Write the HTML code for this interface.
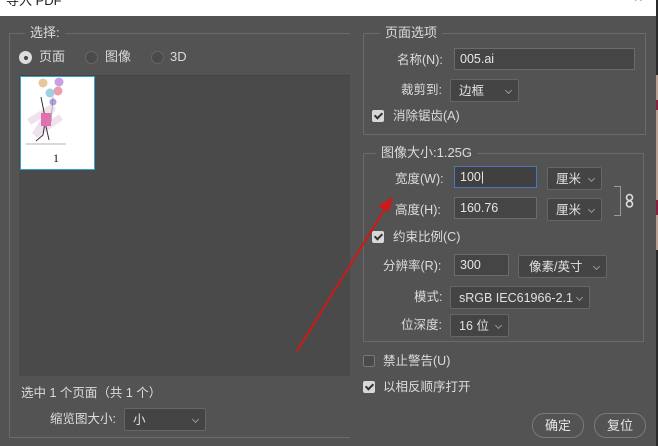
<!DOCTYPE html>
<html><head><meta charset="utf-8"><style>
body{margin:0;width:658px;height:446px;overflow:hidden;background:#535353;position:relative;font-family:"Liberation Sans","Noto Sans CJK SC",sans-serif;font-size:12.5px;color:#dcdcdc}
div,span{position:absolute;box-sizing:border-box}
.t{white-space:nowrap;line-height:16px}
.grp{border:1px solid #6a6a6a}
.lg{background:#535353;padding:0 5px;font-size:13px}
.inp{background:#454545;border:1px solid #6b6b6b;padding:0 5px;line-height:20px;color:#e6e6e6}
.sel{background:#444;border:1px solid #666;border-radius:2px;padding:0 8px;line-height:22px;color:#e0e0e0}
.sel:after{content:"";position:absolute;right:7px;top:8px;width:4px;height:4px;border-right:1px solid #999;border-bottom:1px solid #999;transform:rotate(45deg)}
.cb{width:12px;height:12px;background:#d8d8d8;border-radius:2px}
.cb:after{content:"";position:absolute;left:3.5px;top:1px;width:3px;height:6px;border-right:2px solid #333;border-bottom:2px solid #333;transform:rotate(45deg)}
.cbo{width:12px;height:12px;border:1px solid #777;background:#4a4a4a;border-radius:2px}
.r{width:13px;height:13px;border-radius:50%;border:1px solid #666;background:#4a4a4a}
.btn{border:1px solid #7a7a7a;border-radius:12px;height:25px;line-height:23px;text-align:center;color:#e6e6e6;font-size:13px}
</style></head><body>
<div style="left:0;top:0;width:656px;height:16px;background:#fff"></div>
<div class="t" style="left:6px;top:-7px;color:#222;font-size:13px">导入 PDF</div>
<div class="t" style="left:635px;top:-8px;color:#333;font-size:14px">^</div>
<div style="left:656px;top:0;width:2px;height:446px;background:#2a2a2a"></div>
<div style="left:656px;top:75px;width:2px;height:175px;background:#b9a090"></div>
<div style="left:656px;top:100px;width:2px;height:10px;background:#8a2040"></div>
<div style="left:656px;top:200px;width:2px;height:15px;background:#8a2040"></div>

<div class="grp" style="left:9px;top:33px;width:341px;height:405px;border-right:none"></div>
<div class="t lg" style="left:25px;top:25px">选择:</div>
<div class="r" style="left:19px;top:51px;background:#ddd;border-color:#ddd"></div>
<div style="left:23.5px;top:55.5px;width:4px;height:4px;border-radius:50%;background:#444"></div>
<div class="t" style="left:39px;top:49px;font-size:13px">页面</div>
<div class="r" style="left:85px;top:51px"></div>
<div class="t" style="left:105px;top:49px;font-size:13px">图像</div>
<div class="r" style="left:151px;top:51px"></div>
<div class="t" style="left:170px;top:49px;font-size:13px">3D</div>
<div style="left:19px;top:75px;width:331px;height:301px;background:#4a4a4a;border-top:1px solid #444"></div>
<div style="left:20px;top:76px;width:75px;height:94px;background:#fff;border:1px solid #3aa0c8"></div>
<svg style="position:absolute;left:21px;top:77px" width="73" height="72" viewBox="0 0 73 72">
<path d="M8 45 L32 30 L14 58 L40 40" stroke="#f0e2ec" stroke-width="7" fill="none"/>
<circle cx="22" cy="6" r="4.5" fill="#e8c89a"/><circle cx="38" cy="5" r="4.5" fill="#c8a0e0"/><circle cx="29" cy="16" r="4.5" fill="#9fd0e0"/><circle cx="37" cy="14" r="4.5" fill="#e8a0b0"/><circle cx="32" cy="25" r="3.5" fill="#b0a0e0"/>
<path d="M32 20 L30 45" stroke="#888" stroke-width="0.6"/>
<path d="M20 20 L24 40 M24 45 L22 58 L15 64 M24 45 L28 63" stroke="#333" stroke-width="1" fill="none"/>
<rect x="20" y="36" width="10" height="13" fill="#e070b0"/>
<path d="M5 67 L45 67" stroke="#999" stroke-width="0.8"/>
</svg>
<div class="t" style="left:53px;top:150px;color:#111;font-family:'Liberation Serif',serif;font-size:12px">1</div>
<div class="t" style="left:21px;top:385px">选中 1 个页面（共 1 个）</div>
<div class="t" style="left:50px;top:411px">缩览图大小:</div>
<div class="sel" style="left:124px;top:408px;width:82px;height:23px">小</div>

<div class="grp" style="left:363px;top:33px;width:283px;height:102px"></div>
<div class="t lg" style="left:380px;top:25px">页面选项</div>
<div class="t" style="left:397px;top:52px">名称(N):</div>
<div class="inp" style="left:454px;top:48px;width:181px;height:22px">005.ai</div>
<div class="t" style="left:401px;top:82px">裁剪到:</div>
<div class="sel" style="left:450px;top:79px;width:69px;height:23px">边框</div>
<div class="cb" style="left:372px;top:110px"></div>
<div class="t" style="left:393px;top:108px">消除锯齿(A)</div>

<div class="grp" style="left:363px;top:153px;width:281px;height:189px"></div>
<div class="t lg" style="left:376px;top:145px">图像大小:1.25G</div>
<div class="t" style="left:395px;top:171px">宽度(W):</div>
<div class="inp" style="left:454px;top:166px;width:83px;height:22px;border-color:#4a78b8;background:#404040">100|</div>
<div class="sel" style="left:547px;top:167px;width:55px;height:23px">厘米</div>
<div class="t" style="left:395px;top:202px">高度(H):</div>
<div class="inp" style="left:454px;top:197px;width:83px;height:22px">160.76</div>
<div class="sel" style="left:547px;top:198px;width:55px;height:23px">厘米</div>
<div style="left:614px;top:186px;width:7px;height:30px;border:1px solid #999;border-left:none"></div>
<svg style="position:absolute;left:625px;top:193px" width="10" height="16" viewBox="0 0 10 16">
<rect x="1.5" y="1.5" width="6" height="6" rx="3" fill="none" stroke="#ddd" stroke-width="1.6"/>
<rect x="1.5" y="8" width="6" height="6" rx="3" fill="none" stroke="#ddd" stroke-width="1.6"/>
</svg>
<div class="cb" style="left:372px;top:231px"></div>
<div class="t" style="left:393px;top:229px">约束比例(C)</div>
<div class="t" style="left:383px;top:258px">分辨率(R):</div>
<div class="inp" style="left:454px;top:254px;width:55px;height:22px">300</div>
<div class="sel" style="left:518px;top:255px;width:89px;height:23px;padding-left:10px">像素/英寸</div>
<div class="t" style="left:414px;top:289px">模式:</div>
<div class="sel" style="left:450px;top:286px;width:140px;height:23px">sRGB IEC61966-2.1</div>
<div class="t" style="left:401px;top:317px">位深度:</div>
<div class="sel" style="left:450px;top:314px;width:59px;height:23px">16 位</div>

<div class="cbo" style="left:363px;top:355px"></div>
<div class="t" style="left:383px;top:353px">禁止警告(U)</div>
<div class="cb" style="left:363px;top:381px"></div>
<div class="t" style="left:383px;top:379px">以相反顺序打开</div>
<div class="btn" style="left:532px;top:413px;width:52px">确定</div>
<div class="btn" style="left:594px;top:413px;width:52px">复位</div>

<svg style="position:absolute;left:0;top:0" width="658" height="446">
<line x1="297" y1="351" x2="386" y2="207" stroke="#d01818" stroke-width="2"/>
<polygon points="393,197 378,206 389,212" fill="#d01818"/>
</svg>
</body></html>
